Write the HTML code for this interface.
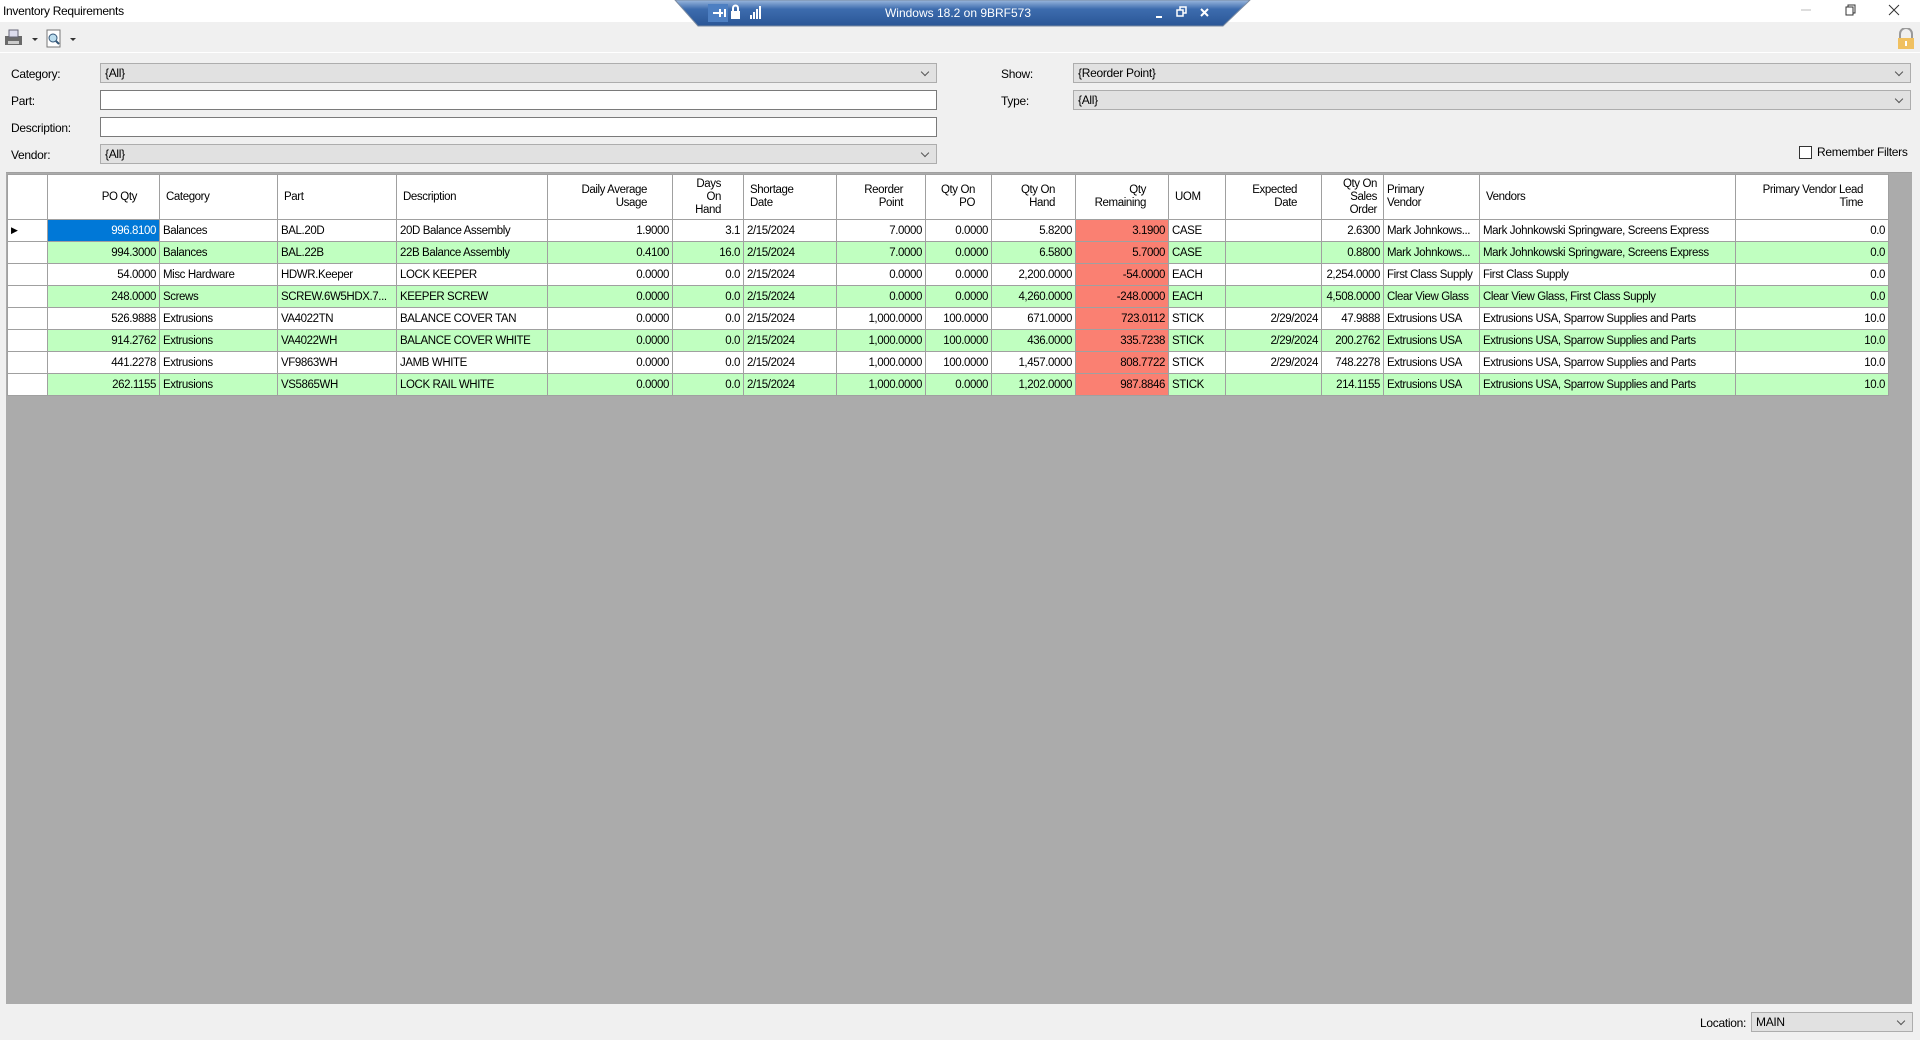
<!DOCTYPE html>
<html><head><meta charset="utf-8"><style>
*{box-sizing:border-box;margin:0;padding:0}
body{width:1920px;height:1040px;background:#f0f0f0;font-family:"Liberation Sans",Arial,sans-serif;font-size:12px;color:#000;position:relative;overflow:hidden}
.a{position:absolute}
.lbl{position:absolute;font-size:12px;letter-spacing:-0.3px}
.cb{position:absolute;background:#e1e1e1;border:1px solid #adadad;height:20px;padding:2px 4px;font-size:12px;letter-spacing:-0.3px}
.cb:after{content:"";position:absolute;right:8px;top:5px;width:5px;height:5px;border-right:1px solid #555;border-bottom:1px solid #555;transform:rotate(45deg)}
.tb{position:absolute;background:#fff;border:1px solid #7a7a7a;height:20px}
table{position:absolute;left:7px;top:174px;width:1881px;border-collapse:collapse;table-layout:fixed;background:#fff;font-size:11.5px;letter-spacing:-0.4px}
td,th{border:1px solid #a0a0a0;overflow:hidden;white-space:nowrap;padding:0 3px;height:22px}
th{font-weight:normal;height:45px;vertical-align:middle;line-height:13px;white-space:normal;text-align:left;padding:0 6px}
th.r{text-align:right}
td.r{text-align:right}
tr.g td{background:#c0ffc0}
td.s{background:#fa8072!important}
td.h{background:#fff!important}
</style></head><body>
<div class="a" style="left:0;top:0;width:1920px;height:22px;background:#fff"></div>
<div class="lbl" style="left:3px;top:4px">Inventory Requirements</div>
<svg class="a" style="left:670px;top:0" width="585" height="28"><defs><linearGradient id="bg" x1="0" y1="0" x2="0" y2="1"><stop offset="0" stop-color="#9bb8de"/><stop offset="0.35" stop-color="#3d6cae"/><stop offset="1" stop-color="#2a5696"/></linearGradient></defs><polygon points="5,0 580,0 553,26 28,26" fill="url(#bg)" stroke="#7a8aa0"/>
<rect x="38" y="4" width="20" height="18" fill="#4d7fc2"/>
<text x="288" y="17" fill="#fff" font-size="12" text-anchor="middle" font-family="Liberation Sans">Windows 18.2 on 9BRF573</text>
<g stroke="#fff" stroke-width="2" fill="none"><path d="M43 13h10M50 9v8M55 9v8"/><path d="M486 17h6"/><path d="M531 9l7 7M538 9l-7 7"/></g>
<rect x="61" y="11" width="9" height="8" fill="#fff"/><path d="M63 11v-3a2.5 2.5 0 0 1 5 0v3" stroke="#fff" stroke-width="2" fill="none"/>
<g fill="#fff"><rect x="80" y="15" width="2" height="4"/><rect x="83" y="12" width="2" height="7"/><rect x="86" y="9" width="2" height="10"/><rect x="89" y="6" width="2" height="13"/></g>
<rect x="507" y="10" width="6" height="6" fill="none" stroke="#fff" stroke-width="1.5"/><path d="M510 10V7h6v6h-3" fill="none" stroke="#fff" stroke-width="1.5"/>
</svg>
<svg class="a" style="left:1795px;top:0" width="125" height="22" stroke="#333" fill="none"><path d="M6 10h10" stroke="#bbb"/><rect x="51" y="7" width="7" height="8"/><path d="M53 7V5h7v8h-2"/><path d="M94 5l10 10M104 5l-10 10"/></svg>
<div class="a" style="left:0;top:52px;width:1920px;height:1px;background:#fff"></div>
<svg class="a" style="left:3px;top:27px" width="80" height="22"><rect x="2" y="9" width="17" height="9" fill="#6a6a6a"/><rect x="6" y="3" width="9" height="7" fill="#dde" stroke="#667"/><rect x="5" y="14" width="11" height="3" fill="#ccc"/><path d="M29 11l3 3 3-3z" fill="#333"/><rect x="44" y="3" width="13" height="17" fill="#fff" stroke="#777"/><circle cx="50" cy="11" r="4" fill="#bde" stroke="#357"/><path d="M53 14l3 3" stroke="#357" stroke-width="2"/><path d="M67 11l3 3 3-3z" fill="#333"/></svg>
<svg class="a" style="left:1896px;top:28px" width="20" height="22"><path d="M4 10V6a6 6 0 0 1 12 0v4" stroke="#999" stroke-width="2" fill="none"/><rect x="2" y="10" width="16" height="11" fill="#f0c060"/><rect x="9" y="13" width="2" height="5" fill="#fff"/></svg>

<div class="lbl" style="left:11px;top:67px">Category:</div>
<div class="cb" style="left:100px;top:63px;width:837px">{All}</div>
<div class="lbl" style="left:11px;top:94px">Part:</div>
<div class="tb" style="left:100px;top:90px;width:837px"></div>
<div class="lbl" style="left:11px;top:121px">Description:</div>
<div class="tb" style="left:100px;top:117px;width:837px"></div>
<div class="lbl" style="left:11px;top:148px">Vendor:</div>
<div class="cb" style="left:100px;top:144px;width:837px">{All}</div>
<div class="lbl" style="left:1001px;top:67px">Show:</div>
<div class="cb" style="left:1073px;top:63px;width:838px">{Reorder Point}</div>
<div class="lbl" style="left:1001px;top:94px">Type:</div>
<div class="cb" style="left:1073px;top:90px;width:838px">{All}</div>
<div class="a" style="left:1799px;top:146px;width:13px;height:13px;background:#fff;border:1px solid #333"></div>
<div class="lbl" style="left:1817px;top:145px">Remember Filters</div>

<div class="a" style="left:6px;top:172px;width:1906px;height:832px;background:#ababab;border-top:1px solid #a0a0a0"></div>
<table>
<colgroup><col style="width:40px"><col style="width:112px"><col style="width:118px"><col style="width:119px"><col style="width:151px"><col style="width:125px"><col style="width:71px"><col style="width:93px"><col style="width:89px"><col style="width:66px"><col style="width:84px"><col style="width:93px"><col style="width:57px"><col style="width:96px"><col style="width:62px"><col style="width:96px"><col style="width:256px"><col style="width:153px"></colgroup>
<tr><th></th><th class="r" style="padding-right:22px">PO Qty</th><th>Category</th><th>Part</th><th>Description</th><th class="r" style="padding-right:25px">Daily Average<br>Usage</th><th class="r" style="padding-right:22px">Days<br>On<br>Hand</th><th>Shortage<br>Date</th><th class="r" style="padding-right:22px">Reorder<br>Point</th><th class="r" style="padding-right:16px">Qty On<br>PO</th><th class="r" style="padding-right:20px">Qty On<br>Hand</th><th class="r" style="padding-right:22px">Qty<br>Remaining</th><th>UOM</th><th class="r" style="padding-right:24px">Expected<br>Date</th><th class="r">Qty On<br>Sales<br>Order</th><th style="padding-left:3px">Primary<br>Vendor</th><th>Vendors</th><th class="r" style="padding-right:25px">Primary Vendor Lead<br>Time</th></tr>
<tr><td class="h" style="font-size:9px">&#9654;</td><td class="r" style="background:#0078d7;color:#fff">996.8100</td><td>Balances</td><td>BAL.20D</td><td>20D Balance Assembly</td><td class="r">1.9000</td><td class="r">3.1</td><td>2/15/2024</td><td class="r">7.0000</td><td class="r">0.0000</td><td class="r">5.8200</td><td class="r s">3.1900</td><td>CASE</td><td></td><td class="r">2.6300</td><td>Mark Johnkows...</td><td>Mark Johnkowski Springware, Screens Express</td><td class="r">0.0</td></tr>
<tr class="g"><td class="h"></td><td class="r">994.3000</td><td>Balances</td><td>BAL.22B</td><td>22B Balance Assembly</td><td class="r">0.4100</td><td class="r">16.0</td><td>2/15/2024</td><td class="r">7.0000</td><td class="r">0.0000</td><td class="r">6.5800</td><td class="r s">5.7000</td><td>CASE</td><td></td><td class="r">0.8800</td><td>Mark Johnkows...</td><td>Mark Johnkowski Springware, Screens Express</td><td class="r">0.0</td></tr>
<tr><td class="h"></td><td class="r">54.0000</td><td>Misc Hardware</td><td>HDWR.Keeper</td><td>LOCK KEEPER</td><td class="r">0.0000</td><td class="r">0.0</td><td>2/15/2024</td><td class="r">0.0000</td><td class="r">0.0000</td><td class="r">2,200.0000</td><td class="r s">-54.0000</td><td>EACH</td><td></td><td class="r">2,254.0000</td><td>First Class Supply</td><td>First Class Supply</td><td class="r">0.0</td></tr>
<tr class="g"><td class="h"></td><td class="r">248.0000</td><td>Screws</td><td>SCREW.6W5HDX.7...</td><td>KEEPER SCREW</td><td class="r">0.0000</td><td class="r">0.0</td><td>2/15/2024</td><td class="r">0.0000</td><td class="r">0.0000</td><td class="r">4,260.0000</td><td class="r s">-248.0000</td><td>EACH</td><td></td><td class="r">4,508.0000</td><td>Clear View Glass</td><td>Clear View Glass, First Class Supply</td><td class="r">0.0</td></tr>
<tr><td class="h"></td><td class="r">526.9888</td><td>Extrusions</td><td>VA4022TN</td><td>BALANCE COVER TAN</td><td class="r">0.0000</td><td class="r">0.0</td><td>2/15/2024</td><td class="r">1,000.0000</td><td class="r">100.0000</td><td class="r">671.0000</td><td class="r s">723.0112</td><td>STICK</td><td class="r">2/29/2024</td><td class="r">47.9888</td><td>Extrusions USA</td><td>Extrusions USA, Sparrow Supplies and Parts</td><td class="r">10.0</td></tr>
<tr class="g"><td class="h"></td><td class="r">914.2762</td><td>Extrusions</td><td>VA4022WH</td><td>BALANCE COVER WHITE</td><td class="r">0.0000</td><td class="r">0.0</td><td>2/15/2024</td><td class="r">1,000.0000</td><td class="r">100.0000</td><td class="r">436.0000</td><td class="r s">335.7238</td><td>STICK</td><td class="r">2/29/2024</td><td class="r">200.2762</td><td>Extrusions USA</td><td>Extrusions USA, Sparrow Supplies and Parts</td><td class="r">10.0</td></tr>
<tr><td class="h"></td><td class="r">441.2278</td><td>Extrusions</td><td>VF9863WH</td><td>JAMB WHITE</td><td class="r">0.0000</td><td class="r">0.0</td><td>2/15/2024</td><td class="r">1,000.0000</td><td class="r">100.0000</td><td class="r">1,457.0000</td><td class="r s">808.7722</td><td>STICK</td><td class="r">2/29/2024</td><td class="r">748.2278</td><td>Extrusions USA</td><td>Extrusions USA, Sparrow Supplies and Parts</td><td class="r">10.0</td></tr>
<tr class="g"><td class="h"></td><td class="r">262.1155</td><td>Extrusions</td><td>VS5865WH</td><td>LOCK RAIL WHITE</td><td class="r">0.0000</td><td class="r">0.0</td><td>2/15/2024</td><td class="r">1,000.0000</td><td class="r">0.0000</td><td class="r">1,202.0000</td><td class="r s">987.8846</td><td>STICK</td><td></td><td class="r">214.1155</td><td>Extrusions USA</td><td>Extrusions USA, Sparrow Supplies and Parts</td><td class="r">10.0</td></tr>
</table>
<div class="lbl" style="left:1700px;top:1016px">Location:</div>
<div class="cb" style="left:1751px;top:1012px;width:162px">MAIN</div>
</body></html>
